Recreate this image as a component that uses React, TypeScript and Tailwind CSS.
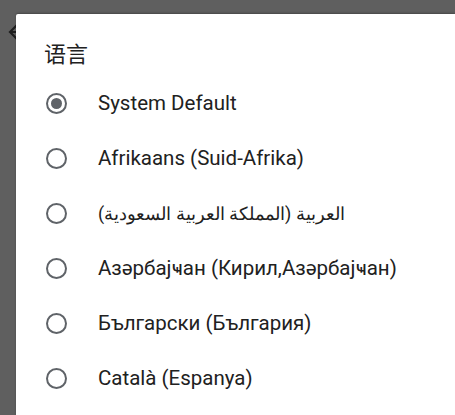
import React, { useState } from 'react';

const languages = [
    'System Default',
    'Afrikaans (Suid-Afrika)',
    'العربية (المملكة العربية السعودية)',
    'Азәрбајҹан (Кирил,Азәрбајҹан)',
    'Български (България)',
    'Català (Espanya)',
];

interface RadioRowProps {
    label: string;
    checked: boolean;
    rtl?: boolean;
    onSelect: () => void;
}

const RadioRow: React.FC<RadioRowProps> = ({ label, checked, rtl, onSelect }) => (
    <div onClick={onSelect} className="h-[55px] flex items-center pl-[30px] cursor-pointer">
        <div className="w-[21px] h-[21px] rounded-full border-[2.2px] border-[#5f6368] flex items-center justify-center shrink-0">
            {checked && <div className="w-[11px] h-[11px] rounded-full bg-[#5f6368]" />}
        </div>
        <span
            className={`ml-[31px] text-[#212121] whitespace-nowrap ${rtl ? 'text-[18px]' : 'text-[20.5px]'}`}
            style={{ unicodeBidi: 'plaintext' }}
        >
            {label}
        </span>
    </div>
);

const App: React.FC = () => {
    const [selected, setSelected] = useState(0);

    return (
        <div className="relative w-[455px] h-[415px] overflow-hidden bg-[#5f5f5f] font-['Roboto','Noto_Sans_CJK_SC',sans-serif]">
            {/* seta de voltar da tela de trás */}
            <svg className="absolute left-[6px] top-[20px]" width="24" height="24" viewBox="0 0 24 24" fill="none" stroke="#1e1e1e" strokeWidth="2.2">
                <path d="M20 12H5M11 5l-7 7 7 7" />
            </svg>

            <div className="relative ml-[16px] mt-[14px] h-[420px] bg-white rounded-tl-[2px] shadow-[0_-1px_2px_rgba(0,0,0,0.25)]">
                <h2 className="pl-[28px] pt-[25px] text-[22px] leading-[26px] text-[#212121] font-['Noto_Sans_CJK_SC','Roboto',sans-serif]">
                    语言
                </h2>
                <div className="mt-[11px]">
                    {languages.map((lang, i) => (
                        <RadioRow
                            key={lang}
                            label={lang}
                            checked={selected === i}
                            rtl={i === 2}
                            onSelect={() => setSelected(i)}
                        />
                    ))}
                </div>
            </div>
        </div>
    );
};

export default App;
